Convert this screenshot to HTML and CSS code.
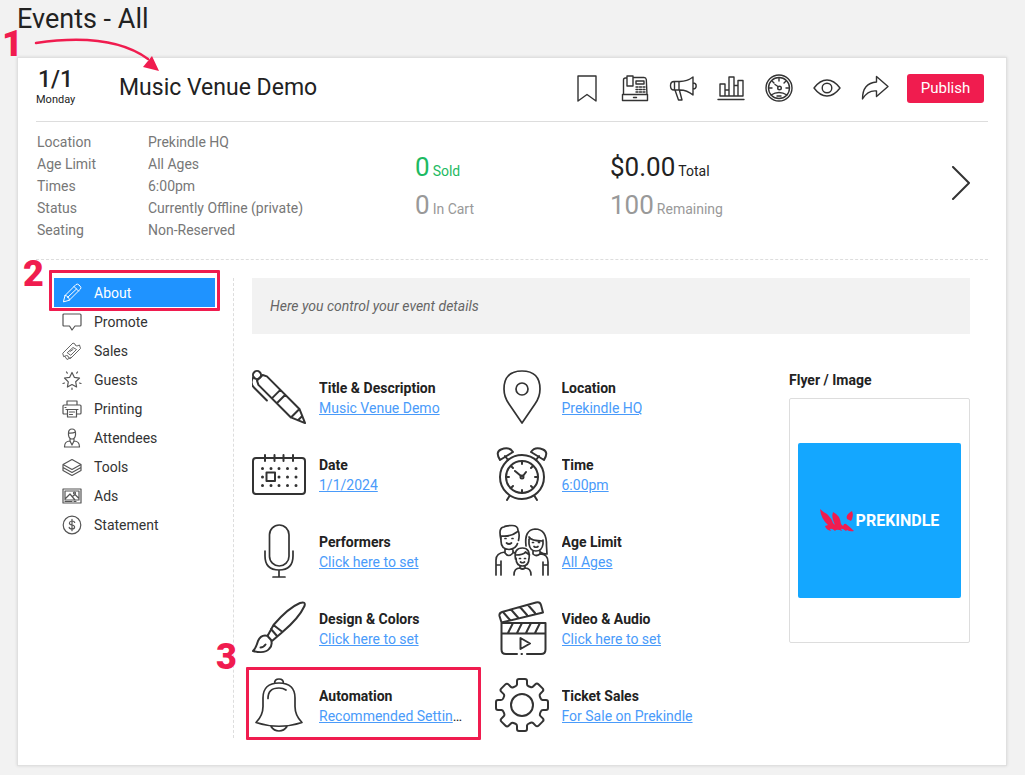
FILE: index.html
```html
<!DOCTYPE html>
<html lang="en">
<head>
    <meta charset="UTF-8">
    <meta name="viewport" content="width=device-width, initial-scale=1.0">
    <title>Events - All</title>
    <link rel="stylesheet" href="styles.css">
</head>
<body>
    <h1 class="page-title">Events - All</h1>

    <main class="card">
        <span class="step step-one">1</span>
        <svg class="step-arrow" viewBox="0 0 126 34" aria-hidden="true">
            <path d="M1 6Q76-5 113 22" fill="none" stroke="#f01c4f" stroke-width="2.5"/>
            <path d="M117 19l7 15-16-4z" fill="#f01c4f" stroke="none"/>
        </svg>

        <header class="event-header">
            <div class="event-date">
                <strong>1/1</strong>
                <span>Monday</span>
            </div>
            <h2 class="event-title">Music Venue Demo</h2>
            <div class="toolbar">
                <button type="button" class="tool" aria-label="Bookmark">
                    <svg viewBox="0 0 28 28"><path d="M5 2h18v25l-9-6.500-9 6.500z"/></svg>
                </button>
                <button type="button" class="tool" aria-label="Box office">
                    <svg viewBox="0 0 28 28"><path d="M2.5 20.5V6q0-2 2-2H6M13 3.5h10q2 0 2.300 2l.7 15M6 2h6v10H6zM15 7h8v3h-8zM1.500 20.500h25v6h-25zM12.500 23.500h3"/><path d="M15 13h9M15 15.500h9M15 18h9" stroke-dasharray="2 1.500"/></svg>
                </button>
                <button type="button" class="tool" aria-label="Announce">
                    <svg viewBox="0 0 28 28"><path d="M11 7.500H5q-3.500 0-3.500 4.200T5 16h6M5.500 7.500V16M10 7.500V16M11 7.500q7 0 13-4.500v18q-6-5-13-5M24 9q3.200 0 3.200 3T24 15M6 16l3.500 10h3.500L10.500 16.500"/></svg>
                </button>
                <button type="button" class="tool" aria-label="Reports">
                    <svg viewBox="0 0 28 28"><path d="M1 25.500h26M3 22V10h5v12zM12 22V3h5v19zM21 22V6.500h5V22zM8 16h4v6H8zM17 11.500h4V22h-4z"/></svg>
                </button>
                <button type="button" class="tool" aria-label="Dashboard">
                    <svg viewBox="0 0 28 28"><circle cx="14" cy="14" r="13"/><circle cx="14" cy="14" r="10.500"/><path d="M14 4v3M4 14h3M21 14h3M7 7l2 2M21 7l-2 2M6 21q8-5 16 0M12 22h4M10 10.500l3 2"/><circle cx="14.500" cy="14" r="1.800"/></svg>
                </button>
                <button type="button" class="tool" aria-label="Preview">
                    <svg viewBox="0 0 28 28"><path d="M1 14Q7 6 14 6t13 8q-6 8-13 8T1 14z"/><circle cx="14" cy="14" r="4.800"/></svg>
                </button>
                <button type="button" class="tool" aria-label="Share">
                    <svg viewBox="0 0 28 28"><path d="M15.500 2.500L27 12.500l-11.500 10V17Q7 16 1.500 25 1.500 9 15.500 8z"/></svg>
                </button>
                <button type="button" class="publish">Publish</button>
            </div>
        </header>

        <section class="summary">
            <dl class="facts">
                <dt>Location</dt><dd>Prekindle HQ</dd>
                <dt>Age Limit</dt><dd>All Ages</dd>
                <dt>Times</dt><dd>6:00pm</dd>
                <dt>Status</dt><dd>Currently Offline (private)</dd>
                <dt>Seating</dt><dd>Non-Reserved</dd>
            </dl>
            <div class="stats">
                <p class="sold"><b>0</b> Sold</p>
                <p class="muted"><b>0</b> In Cart</p>
            </div>
            <div class="stats">
                <p><b>$0.00</b> Total</p>
                <p class="muted"><b>100</b> Remaining</p>
            </div>
            <button type="button" class="next" aria-label="Next">
                <svg viewBox="0 0 20 34"><path d="M2 1l16 16L2 33"/></svg>
            </button>
        </section>

        <div class="event-body">
            <nav class="menu">
                <a href="#" class="menu-item active">
                    <svg viewBox="0 0 20 20"><path d="M1.500 18.500l1.500-6L14 1.500q1.500-1 3 .5l1 1q1.500 1.500.5 3L7.500 17zM3 12.500q3.500 0 4.500 4.500M12 3.500L16.500 8M5.500 14.500L14.500 6"/></svg>
                    About
                    <span class="step step-two">2</span>
                </a>
                <a href="#" class="menu-item">
                    <svg viewBox="0 0 20 20"><path d="M2 2h16q1 0 1 1v10q0 1-1 1h-5l-3 4-2.500-4H2q-1 0-1-1V3q0-1 1-1z"/></svg>
                    Promote
                </a>
                <a href="#" class="menu-item">
                    <svg viewBox="0 0 20 20" class="thin"><path d="M1 12L11 2l2 1q0 2 2 2l2.500-1 1 3.500-10 10-2-1q0-2-2-2L2 15.500zM5.500 11.500l5.500-5 3.500 2-5.500 5.500zM8 10.500l3-2M3 15.500L5 18.500l4-2"/></svg>
                    Sales
                </a>
                <a href="#" class="menu-item">
                    <svg viewBox="0 0 20 20"><path d="M10 2.500l2.300 4.800 5.200.8-3.800 3.700.9 5.200-4.600-2.500L5.400 17l.9-5.200L2.500 8l5.200-.7z"/><path d="M4.500 2l.8 1.200M15.500 2l-.8 1.200M1 13.500l1.500-.5M19 13.500l-1.500-.5M10 18v1.500"/></svg>
                    Guests
                </a>
                <a href="#" class="menu-item">
                    <svg viewBox="0 0 20 20"><path d="M5 6V2h10v4M5 15H2q-1 0-1-1V7q0-1 1-1h16q1 0 1 1v7q0 1-1 1h-3M4 10.500h12M5.500 10.500V18h9v-7.500M7.500 13h5M7.500 15.500h3M3 8.500h1"/></svg>
                    Printing
                </a>
                <a href="#" class="menu-item">
                    <svg viewBox="0 0 20 20"><path d="M6.500 5q0-4 3.500-4t3.500 4v2q-.5 4-3.500 4T6.500 7zM6.500 5q4 .5 7-1M8 11v2q-5.500 0-5.500 6h15q0-6-5.500-6v-2M8 13l2 4 2-4"/></svg>
                    Attendees
                </a>
                <a href="#" class="menu-item">
                    <svg viewBox="0 0 20 20"><path d="M1 7.500l9-5 9 5-9 5zM1 7.500v3l9 5 9-5v-3M1 10.500v3l9 5 9-5v-3"/></svg>
                    Tools
                </a>
                <a href="#" class="menu-item">
                    <svg viewBox="0 0 20 20"><path d="M1 3h18v14H1zM3 5h14v9H3zM3 13l5-5 5 6M10.500 10.500L13 8.500l4 4M3 15.500h7M12 15.500h2"/><circle cx="12.500" cy="7" r="1"/></svg>
                    Ads
                </a>
                <a href="#" class="menu-item">
                    <svg viewBox="0 0 20 20"><circle cx="10" cy="10" r="8.800"/><path d="M12.700 7.500Q12.300 6 10 6T7.400 8q0 1.600 2.600 2t2.600 2q0 2-2.600 2t-2.800-1.600M10 4.300v11.400"/></svg>
                    Statement
                </a>
            </nav>

            <section class="content">
                <p class="hint">Here you control your event details</p>

                <div class="details">
                    <div class="settings">
                        <div class="setting">
                            <svg viewBox="0 0 54 54"><g transform="translate(5 5) rotate(45)"><circle r="4"/><path d="M4-4L8-6h46v12H8L4 4zM54-6l14 6-14 6M27-6V6M34-6V6M61-3v6M-1 4q1 7 8 7h18"/></g></svg>
                            <div class="setting-text"><h3>Title &amp; Description</h3><a href="#">Music Venue Demo</a></div>
                        </div>
                        <div class="setting">
                            <svg viewBox="0 0 54 54" class="thin"><path d="M27 1Q9 1 9 19q0 8 5 15l13 19 13-19q5-7 5-15Q45 1 27 1z"/><circle cx="27" cy="19" r="6"/></svg>
                            <div class="setting-text"><h3>Location</h3><a href="#">Prekindle HQ</a></div>
                        </div>
                        <div class="setting">
                            <svg viewBox="0 0 54 54"><rect x="1" y="11" width="52" height="36" rx="3"/><path d="M13 8v6M22.500 8v6M31.500 8v6M41 8v6M14.500 25.500h8.500v8.500h-8.500z"/><path class="dots" d="M10.500 21.500h0M19 21.500h0M27 21.500h0M35.500 21.500h0M44 21.500h0M10.500 30h0M27 30h0M35.500 30h0M44 30h0M10.500 38.500h0M19 38.500h0M27 38.500h0M35.500 38.500h0M44 38.500h0"/></svg>
                            <div class="setting-text"><h3>Date</h3><a href="#">1/1/2024</a></div>
                        </div>
                        <div class="setting">
                            <svg viewBox="0 0 54 54"><circle cx="27" cy="30" r="22"/><circle cx="27" cy="30" r="16"/><circle cx="27" cy="30" r="1.500"/><path d="M27 14v3M27 43v3M11 30h3M40 30h3M16 19l2 2M38 19l-2 2M16 41l2-2M38 41l-2-2M20 24l6 5M28 29l3-4M14.500 49L12 53M39.500 49l2.500 4M5 13Q0 5 6 2.500 14-1 18 5zM10 9l3 4M49 13q5-8-1-10.500Q40-1 36 5zM44 9l-3 4"/></svg>
                            <div class="setting-text"><h3>Time</h3><a href="#">6:00pm</a></div>
                        </div>
                        <div class="setting">
                            <svg viewBox="0 0 54 54" class="thin"><rect x="17.500" y="1" width="19.500" height="41" rx="9.750"/><path d="M13 27v5q0 14 14 14t14-14v-5M27 46v7M21 53h12"/></svg>
                            <div class="setting-text"><h3>Performers</h3><a href="#">Click here to set</a></div>
                        </div>
                        <div class="setting">
                            <svg viewBox="0 0 54 54" class="thin"><path d="M6 16Q3 3 9 3q1-1.500 8-1.500 6 0 6 5 2 3 .5 10M6 12q10 1 16-4M6 12v5q0 8 8 8.500 7-.5 8.500-6M10 25v4q3.500 5 8 0v-3M10 28q-9 1-9 8v15M6 51V37M1 41h5M18 28l2 1M10 14.500h1M17 14.500h1M11.500 19q2.500 2 5 0"/><path d="M31 22Q29 6 40 5q12 0 11.500 17l.5 8q-4 0-7-2M34 13q2 4 14 4M34 15v5q1 7 7 7t7-7v-4M38 27v3q3 3 7 0v-3M45 30q8 0 8 8v13M48 38v13M48 41h5M37.500 18.500h1M43.500 18.500h1M39 22.500q2 1.500 4 0"/><path d="M20.500 35q-2-11 7-11 8 0 6.500 11M20.500 31q8 0 10-3l4 3M21 34q0 8 6.500 8T34 34M24.500 34.500h1M29.500 34.500h1M25.500 38q2 1.500 4 0M25 42v2q2.500 2 5 0v-2M25 44q-6 0-6 7M30 44q6 0 6 7"/></svg>
                            <div class="setting-text"><h3>Age Limit</h3><a href="#">All Ages</a></div>
                        </div>
                        <div class="setting">
                            <svg viewBox="0 0 54 54"><path d="M21.500 24Q36 7 48 2q6-2 4.500 3Q47 17 30.500 31zM21.500 24l-6 11 4.500 5 10.500-9M19 28l6 7M21.500 24l9 7M16 35q-7-2-10 5-2 7-5 10 12 3 16-2 4-4 2-9M8.500 46.500q3 0 5-3"/></svg>
                            <div class="setting-text"><h3>Design &amp; Colors</h3><a href="#">Click here to set</a></div>
                        </div>
                        <div class="setting">
                            <svg viewBox="0 0 54 54"><path d="M27 53h-.5M22 53H11q-4.500 0-4.500-4.500V22h44v26.500q0 4.500-4.500 4.500H32M6.500 32.500h44M13 32l5-10M22 32l5-10M31 32l5-10M40 32l5-10M6.500 21.500L4.500 15q-.5-3 2.500-4L41 1.500q4-1 5 2.500l2 7.500zM8 11l7 8M16 8.500l7 8M25 6l7 8M33 4l7 8M25.500 37v11l9.500-5.500z"/></svg>
                            <div class="setting-text"><h3>Video &amp; Audio</h3><a href="#">Click here to set</a></div>
                        </div>
                        <div class="setting highlighted">
                            <svg viewBox="0 0 54 54" class="thin"><path d="M4 44.500q7-7 7-16V20Q11 5 27 5t16 15v8.500q0 9 7 16Q27 52 4 44.500zM22.500 5.500q0-4.500 4.500-4.500t4.500 4.500M19 48.500q3 4.500 8 4.500t8-4.500M16 20.500q0-10.500 11-10.500 4 0 7 2"/></svg>
                            <div class="setting-text"><h3>Automation</h3><a href="#">Recommended Settings</a></div>
                            <span class="step step-three">3</span>
                        </div>
                        <div class="setting">
                            <svg viewBox="0 0 54 54">
                                <path id="gear-quarter" d="M22 6V3q0-2 2-2h6q2 0 2 2v3q0 1.600 1.500 2.200l2 .8q1.500.6 2.600-.5l2.300-2.300q1.500-1.500 3 0l4.200 4.200q1.500 1.500 0 3l-2.300 2.300q-1.100 1.100-.5 2.600l.8 2q.6 1.700 2.400 1.700"/>
                                <use href="#gear-quarter" transform="rotate(90 27 27)"/>
                                <use href="#gear-quarter" transform="rotate(180 27 27)"/>
                                <use href="#gear-quarter" transform="rotate(270 27 27)"/>
                                <circle cx="27" cy="27" r="11"/>
                            </svg>
                            <div class="setting-text"><h3>Ticket Sales</h3><a href="#">For Sale on Prekindle</a></div>
                        </div>
                    </div>

                    <aside class="flyer">
                        <h3>Flyer / Image</h3>
                        <div class="flyer-frame">
                            <div class="flyer-image">
                                <svg viewBox="0 0 34 23" aria-hidden="true"><path d="M0 0q3 3 7 5 5 5 6 9l2 2Q11 8 13 3q7 3 8 12l2 2q1-3 3-2 4 3 8 7-4 1-7-1l-1 1q-4-3-5-2l1 2q-4-2-6-1l-1 1q-3-3-5-2l1 2q-5-1-6-5l3-1Q1 10 0 0zM32 2q-7 4-5 8l4 2q3-5 1-10z"/></svg>
                                <span>PREKINDLE</span>
                            </div>
                        </div>
                    </aside>
                </div>
            </section>
        </div>
    </main>
</body>
</html>
```
FILE: styles.css
```css
* {
    box-sizing: border-box;
}
body {
    margin: 0;
    background-color: #f2f2f2;
    color: #222;
    font-family: Roboto, "Liberation Sans", sans-serif;
    font-size: 14px;
    line-height: 20px;
}
h1, h2, h3, p, dl, dd {
    margin: 0;
}
button {
    border: none;
    padding: 0;
    background: none;
    font-family: inherit;
    cursor: pointer;
}
svg {
    display: block;
    flex: none;
    fill: none;
    stroke: #333;
    stroke-width: 2;
    stroke-linecap: round;
    stroke-linejoin: round;
}
.page-title {
    padding: 3px 17px 22px;
    font-size: 27px;
    font-weight: 400;
    line-height: 32px;
}
.card {
    position: relative;
    margin: 0 18px 9px 17px;
    padding: 0 18px 27px;
    border: 1px solid #e0e0e0;
    background-color: #fff;
    box-shadow: 0 0 3px rgba(0, 0, 0, 0.12);
}

/* header */
.event-header {
    display: flex;
    align-items: center;
    height: 64px;
    padding-bottom: 3px;
    border-bottom: 1px solid #ddd;
}
.event-date {
    width: 39px;
    text-align: center;
}
.event-date strong {
    display: block;
    font-size: 23px;
    font-weight: 500;
    line-height: 24px;
}
.event-date span {
    display: block;
    font-size: 11px;
    line-height: 16px;
}
.event-title {
    flex: 1;
    margin-left: 44px;
    font-size: 23px;
    font-weight: 400;
    line-height: 32px;
}
.toolbar {
    display: flex;
    align-items: center;
    gap: 20px;
    padding-right: 4px;
}
.tool svg {
    width: 28px;
    height: 28px;
    stroke-width: 1.4;
}
.publish {
    width: 77px;
    height: 29px;
    margin-left: -2px;
    border-radius: 3px;
    background-color: #f01c4f;
    color: #fff;
    font-size: 15px;
}

/* summary */
.summary {
    display: flex;
    align-items: center;
    padding: 9px 17px 18px 0;
    border-bottom: 1px dashed #ddd;
}
.facts {
    display: grid;
    grid-template-columns: 111px 1fr;
    width: 379px;
    padding-left: 1px;
    color: #777;
    line-height: 22px;
}
.stats {
    width: 195px;
}
.stats p {
    display: flex;
    align-items: baseline;
    gap: 3px;
    height: 38px;
}
.stats b {
    font-size: 26px;
    font-weight: 400;
    line-height: 38px;
}
.stats .sold {
    color: #1dba62;
}
.stats .muted {
    color: #999;
}
.next {
    margin: 0 0 6px auto;
}
.next svg {
    width: 20px;
    height: 34px;
}

/* body */
.event-body {
    display: flex;
    padding: 18px 18px 0;
}
.menu {
    width: 180px;
    padding-right: 18px;
    border-right: 1px dashed #ddd;
}
.menu-item {
    position: relative;
    display: flex;
    align-items: center;
    gap: 12px;
    height: 29px;
    padding-left: 8px;
    color: #333;
    text-decoration: none;
}
.menu-item svg {
    width: 20px;
    height: 20px;
    stroke: #555;
    stroke-width: 1.2;
}
.menu-item svg.thin {
    stroke-width: 0.9;
}
.menu-item.active {
    background-color: #1f93ff;
    color: #fff;
}
.menu-item.active svg {
    stroke: #fff;
    stroke-width: 1;
}
.content {
    flex: 1;
    min-width: 0;
    padding-left: 18px;
}
.hint {
    padding: 18px;
    background-color: #f2f2f2;
    color: #666;
    font-style: italic;
}
.details {
    display: flex;
    gap: 52px;
    padding-top: 29px;
}
.settings {
    flex: 1;
    display: grid;
    grid-template-columns: repeat(2, minmax(0, 1fr));
    row-gap: 10px;
}
.setting {
    position: relative;
    display: flex;
    align-items: center;
    gap: 13px;
    height: 67px;
    padding-right: 28px;
}
.setting svg {
    width: 54px;
    height: 54px;
}
.setting svg.thin {
    stroke-width: 1.7;
}
.setting .dots {
    stroke-width: 3;
}
.setting-text {
    min-width: 0;
    padding-top: 3px;
    overflow: hidden;
    text-overflow: ellipsis;
    white-space: nowrap;
}
.setting-text a {
    color: #4a9bfa;
}
h3 {
    font-size: 14px;
    font-weight: 700;
    line-height: 20px;
}
.flyer {
    width: 181px;
    padding-top: 7px;
}
.flyer-frame {
    display: flex;
    align-items: center;
    height: 245px;
    margin-top: 8px;
    padding: 0 8px;
    border: 1px solid #ddd;
    border-radius: 2px;
}
.flyer-image {
    display: flex;
    flex: 1;
    align-items: center;
    justify-content: center;
    gap: 2px;
    height: 155px;
    border-radius: 2px;
    background-color: #14a7ff;
    color: #fff;
    font-size: 16px;
    font-weight: 700;
}
.flyer-image svg {
    width: 34px;
    height: 23px;
    fill: #f01c4f;
    stroke: none;
}

/* numbered steps drawn over the page */
.step {
    position: absolute;
    color: #f01c4f;
    font-size: 36px;
    font-weight: 900;
    line-height: 36px;
}
.step-one {
    top: -32px;
    left: -16px;
}
.step-two {
    top: -22px;
    left: -31px;
}
.step-three {
    top: -32px;
    left: -36px;
}
.step-arrow {
    position: absolute;
    top: -21px;
    left: 17px;
    width: 126px;
    height: 34px;
    overflow: visible;
}
.menu-item.active::after,
.setting.highlighted::after {
    content: "";
    position: absolute;
    border: 3px solid #f01c4f;
    border-radius: 1px;
}
.menu-item.active::after {
    inset: -8px -5px -4px;
}
.setting.highlighted::after {
    inset: -4px 14px -2px -6px;
}
```
